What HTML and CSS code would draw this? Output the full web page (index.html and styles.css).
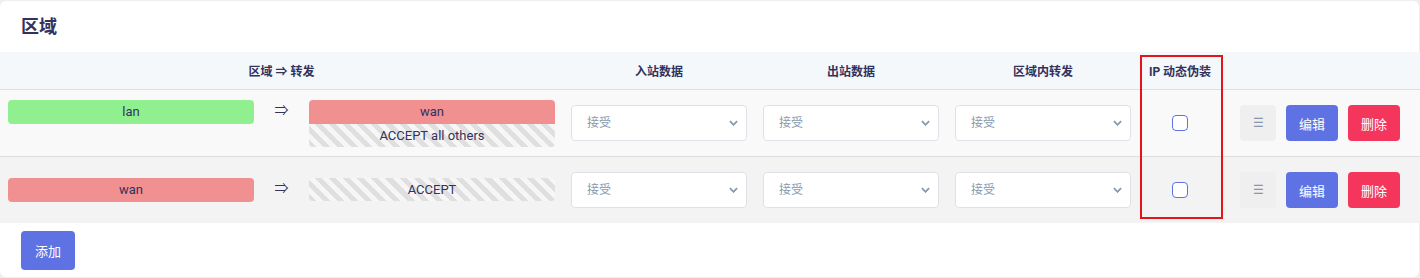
FILE: index.html
```html
<!DOCTYPE html>
<html lang="zh-CN">

<head>
    <meta charset="UTF-8">
    <meta name="viewport" content="width=device-width, initial-scale=1.0">
    <title>防火墙 - 区域</title>

    <link rel="stylesheet" href="styles.css">
</head>

<body>

    <div class="card">
        <h3 class="card-title">区域</h3>

        <div class="table-wrap">
            <table class="zones">
                <colgroup>
                    <col class="c-group">
                    <col class="c-sel">
                    <col class="c-sel">
                    <col class="c-sel">
                    <col class="c-masq">
                    <col>
                </colgroup>
                <thead>
                    <tr>
                        <th>区域 ⇒ 转发</th>
                        <th>入站数据</th>
                        <th>出站数据</th>
                        <th>区域内转发</th>
                        <th>IP 动态伪装</th>
                        <th></th>
                    </tr>
                </thead>
                <tbody>
                    <tr class="odd">
                        <td class="group">
                            <div class="fwd">
                                <div class="zone lan">lan</div>
                                <div class="arrow">⇒</div>
                                <div class="dest">
                                    <div class="zone wan top">wan</div>
                                    <div class="zone striped bottom">ACCEPT all others</div>
                                </div>
                            </div>
                        </td>
                        <td><div class="select-box"><select><option>接受</option></select><svg class="chev" viewBox="0 0 10 6"><path d="M1 1l4 4 4-4" /></svg></div></td>
                        <td><div class="select-box"><select><option>接受</option></select><svg class="chev" viewBox="0 0 10 6"><path d="M1 1l4 4 4-4" /></svg></div></td>
                        <td><div class="select-box"><select><option>接受</option></select><svg class="chev" viewBox="0 0 10 6"><path d="M1 1l4 4 4-4" /></svg></div></td>
                        <td class="center"><input type="checkbox" class="check"></td>
                        <td>
                            <div class="actions">
                                <button class="btn btn-drag">☰</button>
                                <button class="btn btn-edit">编辑</button>
                                <button class="btn btn-del">删除</button>
                            </div>
                        </td>
                    </tr>
                    <tr class="even">
                        <td class="group">
                            <div class="fwd">
                                <div class="zone wan">wan</div>
                                <div class="arrow">⇒</div>
                                <div class="dest">
                                    <div class="zone striped">ACCEPT</div>
                                </div>
                            </div>
                        </td>
                        <td><div class="select-box"><select><option>接受</option></select><svg class="chev" viewBox="0 0 10 6"><path d="M1 1l4 4 4-4" /></svg></div></td>
                        <td><div class="select-box"><select><option>接受</option></select><svg class="chev" viewBox="0 0 10 6"><path d="M1 1l4 4 4-4" /></svg></div></td>
                        <td><div class="select-box"><select><option>接受</option></select><svg class="chev" viewBox="0 0 10 6"><path d="M1 1l4 4 4-4" /></svg></div></td>
                        <td class="center"><input type="checkbox" class="check"></td>
                        <td>
                            <div class="actions">
                                <button class="btn btn-drag">☰</button>
                                <button class="btn btn-edit">编辑</button>
                                <button class="btn btn-del">删除</button>
                            </div>
                        </td>
                    </tr>
                </tbody>
            </table>

            <!-- highlight around the masquerading column -->
            <div class="highlight"></div>
        </div>

        <div class="card-foot">
            <button class="btn btn-add">添加</button>
        </div>
    </div>

</body>

</html>
```

FILE: styles.css
```css
body {
    margin: 0;
    padding: 0;
    background-color: #eeeeee;
    font-family: Roboto, "Noto Sans CJK SC", sans-serif;
    font-size: 12px;
    color: #32325d;
}

.card {
    width: 1419px;
    margin-top: 1px;
    padding-bottom: 7px;
    background-color: white;
    border-radius: 6px;
}

.card-title {
    margin: 0;
    padding: 13px 21px;
    font-size: 18px;
    line-height: 25px;
    font-weight: bold;
}

.table-wrap {
    position: relative;
}

.zones {
    width: 1420px;
    border-collapse: collapse;
    table-layout: fixed;
}

.c-group {
    width: 563px;
}

.c-sel {
    width: 192px;
}

.c-masq {
    width: 82px;
}

.zones th {
    height: 37px;
    padding: 0 8px;
    background-color: #f5f8fb;
    border-bottom: 1px solid #dcdfe3;
    font-weight: bold;
    text-align: center;
}

.zones td {
    height: 36px;
    padding: 15px 8px;
    vertical-align: middle;
}

.zones td.group {
    padding-top: 9px;
    padding-bottom: 9px;
}

.odd td {
    background-color: #f9f9f9;
    border-bottom: 1px solid #dedede;
}

.even td {
    background-color: #f3f3f3;
}

.center {
    text-align: center;
}

.fwd {
    display: flex;
    align-items: flex-start;
}

.zone {
    height: 24px;
    line-height: 24px;
    text-align: center;
    border-radius: 4px;
    font-size: 13px;
}

.fwd > .zone,
.dest {
    flex: 1;
}

.lan {
    background-color: #90f090;
}

.wan {
    background-color: #f09090;
}

.striped {
    height: 23px;
    line-height: 23px;
    background: repeating-linear-gradient(45deg, #dfdfdf, #dfdfdf 5px, #f6f6f6 5px, #f6f6f6 10px);
}

.top {
    border-radius: 4px 4px 0 0;
}

.bottom {
    border-radius: 0 0 4px 4px;
}

.arrow {
    width: 55px;
    text-align: center;
    font-size: 14px;
    line-height: 20px;
}

.select-box {
    position: relative;
}

.select-box select {
    display: block;
    width: 100%;
    height: 36px;
    padding: 0 28px 0 15px;
    appearance: none;
    background-color: white;
    border: 1px solid #dee2e6;
    border-radius: 4px;
    font-family: inherit;
    font-size: 12px;
    color: #8898aa;
}

.chev {
    position: absolute;
    right: 9px;
    top: 15px;
    width: 9px;
    height: 6px;
    fill: none;
    stroke: #8898aa;
    stroke-width: 2;
}

.check {
    appearance: none;
    display: block;
    width: 16px;
    height: 16px;
    margin: 0 auto;
    background-color: white;
    border: 1px solid #5e72e4;
    border-radius: 4px;
}

.actions {
    display: flex;
    gap: 10px;
    padding-left: 11px;
}

.btn {
    height: 36px;
    border: none;
    border-radius: 4px;
    font-family: inherit;
    font-size: 13px;
    color: white;
    cursor: pointer;
}

.btn-drag {
    width: 36px;
    background-color: #efefef;
    color: #8898aa;
    font-size: 12px;
}

.btn-edit,
.btn-del {
    width: 52px;
}

.btn-edit {
    background-color: #5e72e4;
}

.btn-del {
    background-color: #f5365c;
}

.highlight {
    position: absolute;
    left: 1140px;
    top: 3px;
    width: 79px;
    height: 160px;
    border: 2px solid #e3151b;
}

.card-foot {
    padding: 8px 21px 0;
}

.btn-add {
    width: 54px;
    height: 39px;
    background-color: #5e72e4;
}
```
